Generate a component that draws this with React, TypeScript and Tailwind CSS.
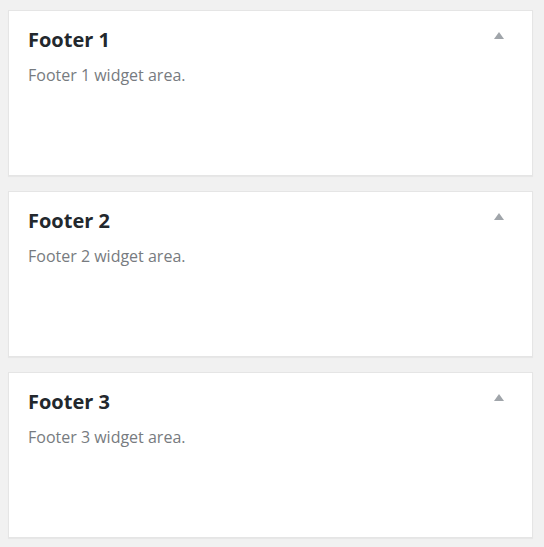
const areas = [1, 2, 3];

function FooterPanel({ n }: { n: number }) {
  return (
    <div className="h-[166px] bg-white border border-[#e5e5e5] shadow-[0_1px_1px_rgba(0,0,0,0.04)] pl-[19px] pr-[28px] pt-[15px]">
      <div className="flex items-start justify-between">
        <h3 className="text-[20px] leading-[28px] font-bold text-[#23282d]">Footer {n}</h3>
        <svg width="10" height="8" viewBox="0 0 10 8" className="mt-[6px]">
          <polygon points="5,0 10,7 0,7" fill="#a0a5aa" />
        </svg>
      </div>
      <p className="mt-[11px] text-[16px] leading-[20px] text-[#777b80]">Footer {n} widget area.</p>
    </div>
  );
}

export default function App() {
  return (
    <div
      className="w-[544px] h-[547px] bg-[#f1f1f1] pl-[8px] pr-[11px] pt-[10px] flex flex-col gap-[15px]"
      style={{ fontFamily: '"Open Sans", sans-serif' }}
    >
      {areas.map((n) => (
        <FooterPanel key={n} n={n} />
      ))}
    </div>
  );
}
